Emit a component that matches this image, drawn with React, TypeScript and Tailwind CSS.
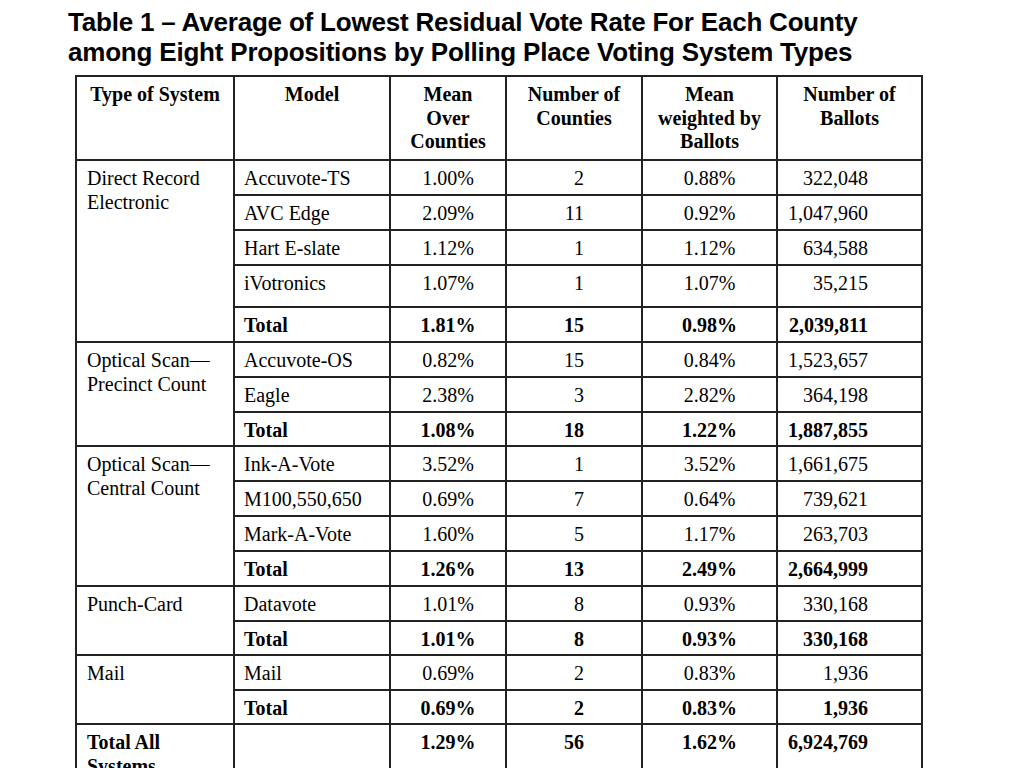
import React from "react";

type Row = {
  type?: string[];
  span?: number;
  model: string;
  mean: string;
  n: string;
  w: string;
  ballots: string;
  bold?: boolean;
  h: number;
};

const rows: Row[] = [
  { type: ["Direct Record", "Electronic"], span: 5, model: "Accuvote-TS", mean: "1.00%", n: "2", w: "0.88%", ballots: "322,048", h: 35 },
  { model: "AVC Edge", mean: "2.09%", n: "11", w: "0.92%", ballots: "1,047,960", h: 35 },
  { model: "Hart E-slate", mean: "1.12%", n: "1", w: "1.12%", ballots: "634,588", h: 35 },
  { model: "iVotronics", mean: "1.07%", n: "1", w: "1.07%", ballots: "35,215", h: 42 },
  { model: "Total", mean: "1.81%", n: "15", w: "0.98%", ballots: "2,039,811", bold: true, h: 35 },
  { type: ["Optical Scan\u2014", "Precinct Count"], span: 3, model: "Accuvote-OS", mean: "0.82%", n: "15", w: "0.84%", ballots: "1,523,657", h: 35 },
  { model: "Eagle", mean: "2.38%", n: "3", w: "2.82%", ballots: "364,198", h: 35 },
  { model: "Total", mean: "1.08%", n: "18", w: "1.22%", ballots: "1,887,855", bold: true, h: 34 },
  { type: ["Optical Scan\u2014", "Central Count"], span: 4, model: "Ink-A-Vote", mean: "3.52%", n: "1", w: "3.52%", ballots: "1,661,675", h: 35 },
  { model: "M100,550,650", mean: "0.69%", n: "7", w: "0.64%", ballots: "739,621", h: 35 },
  { model: "Mark-A-Vote", mean: "1.60%", n: "5", w: "1.17%", ballots: "263,703", h: 35 },
  { model: "Total", mean: "1.26%", n: "13", w: "2.49%", ballots: "2,664,999", bold: true, h: 35 },
  { type: ["Punch-Card"], span: 2, model: "Datavote", mean: "1.01%", n: "8", w: "0.93%", ballots: "330,168", h: 35 },
  { model: "Total", mean: "1.01%", n: "8", w: "0.93%", ballots: "330,168", bold: true, h: 34 },
  { type: ["Mail"], span: 2, model: "Mail", mean: "0.69%", n: "2", w: "0.83%", ballots: "1,936", h: 35 },
  { model: "Total", mean: "0.69%", n: "2", w: "0.83%", ballots: "1,936", bold: true, h: 34 },
];

const cell = "border-2 border-[#222] align-top pt-[6px] pb-0";

export default function App() {
  return (
    <div className="w-[1024px] h-[768px] overflow-hidden bg-white text-black">
      <h1
        className="pl-[68px] pt-[7px] text-[26px] leading-[30px] font-bold tracking-[-0.2px] whitespace-nowrap"
        style={{ fontFamily: '"Liberation Sans", Arial, sans-serif' }}
      >
        Table 1 – Average of Lowest Residual Vote Rate For Each County
        <br />
        among Eight Propositions by Polling Place Voting System Types
      </h1>
      <table
        className="ml-[75px] mt-[8px] border-collapse table-fixed w-[846px] text-[20px] leading-[23.5px]"
        style={{ fontFamily: '"Liberation Serif", "Times New Roman", serif' }}
      >
        <colgroup>
          <col className="w-[158px]" />
          <col className="w-[156px]" />
          <col className="w-[116px]" />
          <col className="w-[136px]" />
          <col className="w-[135px]" />
          <col className="w-[145px]" />
        </colgroup>
        <thead>
          <tr className="h-[84px] font-bold text-center">
            <td className={`${cell} pt-[6px]`}>Type of System</td>
            <td className={`${cell} pt-[6px]`}>Model</td>
            <td className={`${cell} pt-[6px]`}>Mean<br />Over<br />Counties</td>
            <td className={`${cell} pt-[6px]`}>Number of<br />Counties</td>
            <td className={`${cell} pt-[6px]`}>Mean<br />weighted by<br />Ballots</td>
            <td className={`${cell} pt-[6px]`}>Number of<br />Ballots</td>
          </tr>
        </thead>
        <tbody>
          {rows.map((r, i) => (
            <tr key={i} style={{ height: r.h }} className={r.bold ? "font-bold" : ""}>
              {r.type && (
                <td rowSpan={r.span} className={`${cell} pl-[10px] font-normal`}>
                  {r.type.map((t, j) => (
                    <div key={j}>{t}</div>
                  ))}
                </td>
              )}
              <td className={`${cell} pl-[9px]`}>{r.model}</td>
              <td className={`${cell} text-center`}>{r.mean}</td>
              <td className={`${cell} text-right pr-[57px]`}>{r.n}</td>
              <td className={`${cell} text-center`}>{r.w}</td>
              <td className={`${cell} text-right pr-[53px]`}>{r.ballots}</td>
            </tr>
          ))}
          <tr className="h-[70px] font-bold">
            <td className={`${cell} pl-[10px]`}>Total All<br />Systems</td>
            <td className={cell}></td>
            <td className={`${cell} text-center`}>1.29%</td>
            <td className={`${cell} text-right pr-[57px]`}>56</td>
            <td className={`${cell} text-center`}>1.62%</td>
            <td className={`${cell} text-right pr-[53px]`}>6,924,769</td>
          </tr>
        </tbody>
      </table>
    </div>
  );
}
